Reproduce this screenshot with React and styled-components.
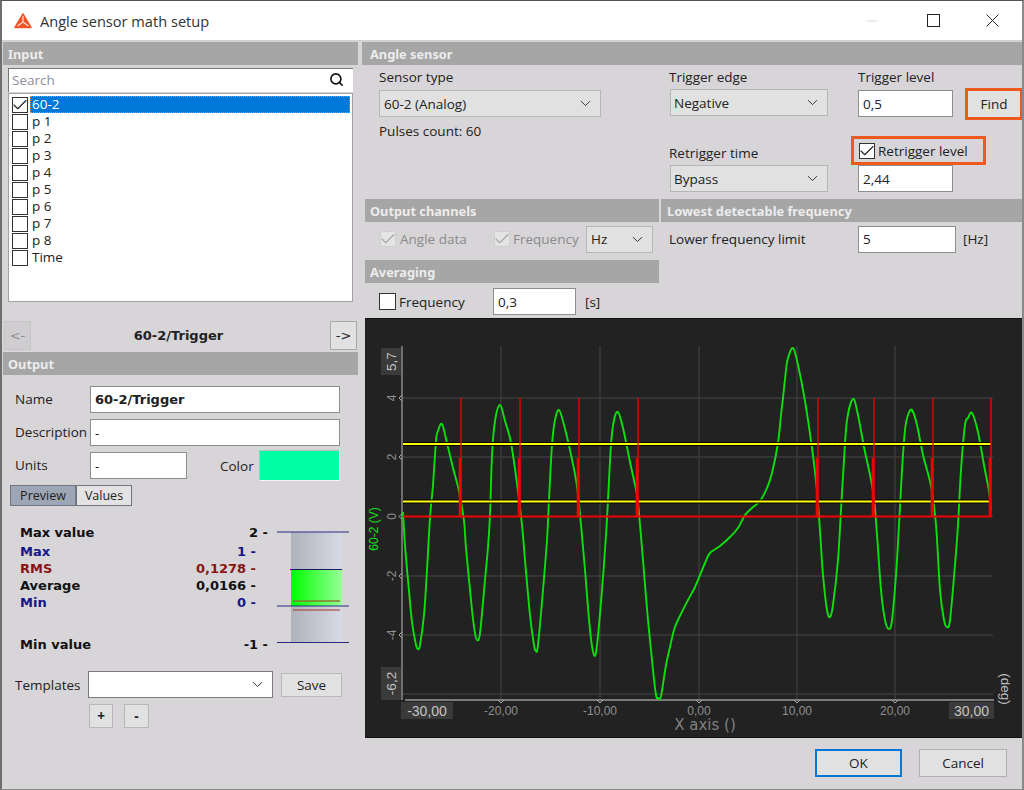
import React from 'react';
import styled, { createGlobalStyle } from 'styled-components';
import { Search, ChevronDown, Minus, X, Check } from 'lucide-react';

const GlobalStyle = createGlobalStyle`
  html, body {
    margin: 0;
    padding: 0;
    background: #d7d5d8;
  }
  * {
    box-sizing: border-box;
  }
`;

// Window frame
const Window = styled.div`
  width: 1024px;
  height: 790px;
  display: flex;
  flex-direction: column;
  background: #d7d5d8;
  border-top: 1px solid #555;
  border-left: 2px solid #6e6e6e;
  border-right: 2px solid #8a8a8a;
  border-bottom: 1px solid #8a8a8a;
  font-family: "Open Sans", "Liberation Sans", sans-serif;
  font-size: 13.5px;
  color: #222;
  overflow: hidden;
`;

const TitleBar = styled.div`
  height: 40px;
  flex: none;
  display: flex;
  align-items: center;
  background: #fff;
  border-bottom: 1px solid #d0d0d0;
  padding-left: 12px;
`;

const TitleText = styled.span`
  margin-left: 8px;
  font-size: 14.6px;
  color: #333;
  flex: 1;
`;

const WindowButton = styled.div`
  width: 60px;
  height: 40px;
  display: flex;
  align-items: center;
  justify-content: center;
  color: ${(p) => (p.$muted ? '#c4c4c4' : '#222')};
`;

const MaximizeGlyph = styled.span`
  width: 13px;
  height: 13px;
  margin-left: 2px;
  border: 1.4px solid #222;
`;

const Body = styled.div`
  flex: 1;
  min-height: 0;
  display: grid;
  grid-template-columns: 356px 1fr;
  gap: 4px;
  padding-top: 1px;
`;

const SectionHeader = styled.div`
  height: 23px;
  display: flex;
  align-items: center;
  padding-left: ${(p) => p.$pad || 5}px;
  background: #a6a6a6;
  color: #ececec;
  font-family: "Noto Sans", sans-serif;
  font-weight: 700;
  font-size: 12.8px;
`;

// Left column
const LeftColumn = styled.div`
  display: flex;
  flex-direction: column;
  padding-left: 1px;
`;

const SearchBox = styled.div`
  height: 24px;
  margin: 3px 5px 1px 5px;
  display: flex;
  align-items: center;
  justify-content: space-between;
  padding: 0 9px 2px 3px;
  background: #fff;
  border-top: 1px solid #777;
  border-left: 1px solid #777;
  color: #8d8d9a;
`;

const ChannelList = styled.div`
  height: 209px;
  margin: 0 5px;
  padding: 2px 2px 2px 3px;
  background: #fff;
  border: 1px solid #a2a2a2;
`;

const ChannelRow = styled.div`
  height: 17px;
  display: flex;
  align-items: center;
  gap: 2px;
`;

const Box = styled.span`
  width: ${(p) => p.$size || 16}px;
  height: ${(p) => p.$size || 16}px;
  flex: none;
  display: inline-flex;
  align-items: center;
  justify-content: center;
  background: ${(p) => (p.$disabled ? '#e4e4e4' : '#fff')};
  border: 1px solid ${(p) => (p.$disabled ? '#cfcfcf' : '#333')};
  color: ${(p) => (p.$disabled ? '#a8a8a8' : '#222')};

  svg {
    flex: none;
  }
`;

const ChannelName = styled.span`
  flex: ${(p) => (p.$selected ? 1 : 'none')};
  height: 17px;
  line-height: 16px;
  padding-left: 2px;
  font-size: 13.5px;
  color: ${(p) => (p.$selected ? '#fff' : '#222')};
  background: ${(p) => (p.$selected ? '#0078d7' : 'transparent')};
  outline: ${(p) => (p.$selected ? '1px dotted #f08a3c' : 'none')};
  outline-offset: -1px;
`;

const NavRow = styled.div`
  height: 30px;
  margin: 18px 1px 2px 1px;
  display: flex;
  align-items: center;
  justify-content: space-between;
`;

const NavButton = styled.div`
  width: 27px;
  height: 29px;
  display: flex;
  align-items: center;
  justify-content: center;
  font-family: "DejaVu Sans", sans-serif;
  font-size: 13px;
  color: ${(p) => (p.$disabled ? '#8e8e8e' : '#222')};
  background: ${(p) => (p.$disabled ? '#cfcdd0' : '#e1e1e1')};
  border: 1px solid ${(p) => (p.$disabled ? '#c4c4c4' : '#a8a8a8')};
`;

const NavTitle = styled.span`
  font-family: "DejaVu Sans", sans-serif;
  font-weight: 700;
  font-size: 13px;
  margin-right: 4px;
`;

const OutputForm = styled.div`
  padding: 11px 0 0 12px;
  display: flex;
  flex-direction: column;
  gap: 6px;
`;

const FormRow = styled.div`
  display: flex;
  align-items: center;
  height: 27px;
`;

const FormLabel = styled.span`
  width: 75px;
  flex: none;
  margin-top: -2px;
`;

const TextField = styled.div`
  width: ${(p) => p.$width}px;
  height: 27px;
  flex: none;
  display: flex;
  align-items: center;
  padding-left: 4px;
  background: #fff;
  border: 1px solid #8e8e8e;
  font-weight: ${(p) => (p.$bold ? 700 : 400)};
  font-family: ${(p) => (p.$bold ? '"DejaVu Sans", sans-serif' : 'inherit')};
  font-size: ${(p) => (p.$bold ? '13px' : 'inherit')};
`;

const ColorLabel = styled.span`
  margin-left: 33px;
  width: 39px;
`;

const ColorSwatch = styled.div`
  width: 81px;
  height: 31px;
  background: #00ffa5;
  border: 1px solid #f4f4f4;
  border-top-color: #bdbdbd;
  border-left-color: #bdbdbd;
`;

const Tabs = styled.div`
  display: flex;
  margin: 6px 0 0 7px;
`;

const Tab = styled.div`
  height: 21px;
  width: ${(p) => p.$width}px;
  display: flex;
  align-items: center;
  justify-content: center;
  font-size: 12.5px;
  background: ${(p) => (p.$active ? '#9ca6b5' : '#e3e3e3')};
  border: 1px solid #6f7680;
`;

const StatsArea = styled.div`
  height: 134px;
  margin-top: 25px;
  display: flex;
`;

const StatRows = styled.div`
  width: 273px;
  flex: none;
  position: relative;
  font-family: "DejaVu Sans", sans-serif;
  font-weight: 700;
  font-size: 13px;
`;

const StatRow = styled.div`
  position: absolute;
  top: ${(p) => p.$y}px;
  left: 17px;
  right: ${(p) => (p.$limit ? 8 : 20)}px;
  display: flex;
  justify-content: space-between;
  line-height: 18px;
  color: ${(p) => p.$color || '#111'};
`;

const Gauge = styled.svg`
  display: block;
`;

const TemplateRow = styled.div`
  margin: 6px 0 0 12px;
  height: 27px;
  display: flex;
  align-items: center;
  gap: 8px;
`;

const TemplateLabel = styled.span`
  width: 65px;
  flex: none;
`;

const SmallButtons = styled.div`
  margin: 6px 0 0 86px;
  display: flex;
  gap: 11px;
`;

const Button = styled.div`
  width: ${(p) => p.$width}px;
  height: ${(p) => p.$height || 24}px;
  flex: none;
  display: flex;
  align-items: center;
  justify-content: center;
  background: #e1e1e1;
  border: 1px solid #b8b8b8;
  font-weight: ${(p) => (p.$bold ? 700 : 400)};
`;

// Dropdowns
const Select = styled.div`
  width: ${(p) => p.$width}px;
  height: 27px;
  flex: none;
  display: flex;
  align-items: center;
  justify-content: space-between;
  padding: 0 6px 0 4px;
  background: ${(p) => (p.$white ? '#fff' : '#e1e1e1')};
  border: 1px solid ${(p) => (p.$white ? '#7a7a7a' : '#b6b6b6')};
`;

const EdgeSelect = styled(Select)`
  margin-left: 1px;
  padding-left: 3px;
`;

// Right column
const RightColumn = styled.div`
  display: flex;
  flex-direction: column;
  min-width: 0;
`;

const SensorGrid = styled.div`
  height: 134px;
  display: grid;
  grid-template-columns: 290px 189px 1fr;
  padding-left: 17px;
`;

const FieldColumn = styled.div`
  display: flex;
  flex-direction: column;
`;

const FieldLabel = styled.div`
  height: 25px;
  padding-top: 3px;
  line-height: 19px;
`;

const ShortLabel = styled(FieldLabel)`
  height: 24px;
`;

const Spaced = styled.div`
  margin-top: ${(p) => p.$top}px;
`;

const TriggerRow = styled.div`
  height: 27px;
  display: flex;
  align-items: flex-start;
  gap: 12px;
`;

const Highlight = styled.div`
  border: 3px solid #f0591e;
`;

const FindOutline = styled(Highlight)`
  width: 58px;
  height: 32px;
  flex: none;
  margin-top: -2px;
`;

const FindButton = styled.div`
  height: 100%;
  display: flex;
  align-items: center;
  justify-content: center;
  background: #e1e1e1;
`;

const RetriggerOutline = styled(Highlight)`
  width: 135px;
  height: 29px;
  margin: 19px 0 0 -7px;
  padding-left: 5px;
  display: flex;
  align-items: center;
  gap: 3px;
`;

const MiddleGrid = styled.div`
  height: 119px;
  display: grid;
  grid-template-columns: 294px 1fr;
  gap: 2px;
  padding-left: 3px;
`;

const Stack = styled.div`
  display: flex;
  flex-direction: column;
`;

const CheckRow = styled.div`
  height: 38px;
  display: flex;
  align-items: center;
  padding: 0 0 4px 15px;
`;

const CheckLabel = styled.span`
  margin-left: ${(p) => p.$gap || 4}px;
  width: ${(p) => p.$width}px;
  flex: none;
  color: ${(p) => (p.$disabled ? '#8a8a8a' : '#222')};
`;

const AveragingRow = styled.div`
  height: 35px;
  display: flex;
  align-items: center;
  padding: 2px 0 0 14px;
`;

const UnitText = styled.span`
  margin-left: ${(p) => p.$gap}px;
`;

const LimitRow = styled.div`
  height: 38px;
  display: flex;
  align-items: center;
  padding: 0 0 4px 8px;
`;

const LimitLabel = styled.span`
  width: 189px;
  flex: none;
`;

const ChartPanel = styled.div`
  flex: 1;
  margin-left: 3px;
  background: #222;
  border-top: 1px solid #111;
  border-bottom: 1px solid #111;
`;

const ChartSvg = styled.svg`
  display: block;
`;

const Footer = styled.div`
  height: 52px;
  flex: none;
  display: flex;
  justify-content: flex-end;
  align-items: flex-start;
  gap: 17px;
  padding: 12px 15px 0 0;
`;

const DialogButton = styled.div`
  width: ${(p) => p.$width}px;
  height: 28px;
  display: flex;
  align-items: center;
  justify-content: center;
  background: #e1e1e1;
  border: ${(p) => (p.$primary ? '2px solid #0078d7' : '1px solid #b0b0b0')};
`;

const channels = ['p 1', 'p 2', 'p 3', 'p 4', 'p 5', 'p 6', 'p 7', 'p 8', 'Time'];

const stats = [
  { label: 'Max value', value: '2 -', y: 0, limit: true },
  { label: 'Max', value: '1 -', y: 19, color: '#16168a' },
  { label: 'RMS', value: '0,1278 -', y: 36, color: '#8a1414' },
  { label: 'Average', value: '0,0166 -', y: 53 },
  { label: 'Min', value: '0 -', y: 70, color: '#16168a' },
  { label: 'Min value', value: '-1 -', y: 112, limit: true },
];

// chart drawing is in chart-local coordinates: page x - 365, page y - 319
const OX = 365;
const OY = 319;

const trace = [
  [403, 512], [405, 545], [408, 580], [412, 622], [416, 645], [418, 649], [420, 645], [424, 615], [427, 570],
  [430, 518], [433, 485], [436, 441], [438, 431], [442, 424], [447, 443], [453, 468], [459, 491], [464, 521],
  [466, 548], [472, 610], [475, 633], [477, 640], [480, 633], [485, 580], [488, 547], [490, 515], [492, 455],
  [495, 421], [500, 405], [505, 421], [511, 443], [518, 491], [522, 525], [525, 560], [530, 615], [534, 645],
  [536, 651], [538, 645], [543, 590], [547, 540], [549, 500], [552, 445], [555, 420], [559, 410], [564, 425],
  [570, 450], [577, 486], [581, 525], [585, 570], [590, 630], [594, 655], [597, 645], [602, 590], [606, 535],
  [608, 500], [611, 445], [614, 420], [618, 412], [623, 428], [630, 462], [637, 495], [640, 525], [643, 560],
  [648, 620], [653, 670], [656, 695], [658, 698], [661, 696], [666, 665], [670, 647], [674, 630], [678, 620],
  [688, 600], [695, 587], [705, 563], [710, 553], [720, 546], [730, 537], [738, 528], [745, 515], [752, 508],
  [760, 501], [767, 488], [772, 473], [778, 443], [781, 415], [783, 398], [786, 370], [788, 358], [793, 348],
  [798, 365], [805, 401], [812, 448], [817, 491], [820, 531], [823, 575], [827, 610], [830, 617], [833, 605],
  [838, 560], [841, 510], [844, 460], [847, 420], [853, 399], [858, 415], [864, 447], [873, 491], [877, 535],
  [881, 590], [885, 620], [889, 629], [892, 620], [896, 575], [899, 525], [902, 470], [905, 430], [908, 415],
  [912, 410], [917, 425], [923, 455], [931, 486], [936, 525], [940, 590], [944, 620], [947, 627], [950, 620],
  [955, 565], [958, 525], [961, 470], [965, 425], [968, 418], [972, 413], [978, 432], [984, 465], [989, 491],
  [991, 510],
];

const toPath = (pts) => {
  const p = pts.map(([x, y]) => [x - OX, y - OY]);
  let d = `M${p[0][0]} ${p[0][1]}`;
  for (let i = 0; i < p.length - 1; i++) {
    const a = p[i - 1] || p[i];
    const b = p[i];
    const c = p[i + 1];
    const e = p[i + 2] || c;
    const c1 = [b[0] + (c[0] - a[0]) / 6, b[1] + (c[1] - a[1]) / 6];
    const c2 = [c[0] - (e[0] - b[0]) / 6, c[1] - (e[1] - b[1]) / 6];
    d += `C${c1[0].toFixed(1)} ${c1[1].toFixed(1)} ${c2[0].toFixed(1)} ${c2[1].toFixed(1)} ${c[0]} ${c[1]}`;
  }
  return d;
};

const pulses = [461, 520, 579, 638, 818, 874, 933, 991];
const gridX = [501, 600, 699, 797, 895];
const gridY = [398, 457, 576, 635, 694];
const xTicks = [[501, '-20,00'], [600, '-10,00'], [699, '0,00'], [797, '10,00'], [895, '20,00']];
const yTicks = [[398, '4'], [457, '2'], [516.5, '0'], [576, '-2'], [635, '-4']];

const Chart = () => (
  <ChartSvg width="657" height="418" viewBox="0 0 657 418" fontFamily='"Liberation Sans", sans-serif'>
    {gridX.map((x) => (
      <line key={x} x1={x - OX} x2={x - OX} y1={346 - OY} y2={700 - OY} stroke="#3b3b3b" strokeWidth="1.5" />
    ))}
    {gridY.concat(516.5).map((y) => (
      <line key={y} x1={402 - OX} x2={993 - OX} y1={y - OY} y2={y - OY} stroke="#3b3b3b" strokeWidth="1.5" />
    ))}
    <line x1={402 - OX} x2={402 - OX} y1={346 - OY} y2={700 - OY} stroke="#8a8a8a" strokeWidth="1.5" />
    <line x1={405 - OX} x2={994 - OX} y1={700 - OY} y2={700 - OY} stroke="#9a9a9a" strokeWidth="1.5" />
    {xTicks.map(([x, t]) => (
      <g key={t}>
        <path d={`M${x - OX - 3} ${700 - OY}l3 3l3 -3`} fill="none" stroke="#aaa" />
        <text x={x - OX} y={715 - OY} textAnchor="middle" fontSize="12" fill="#8f8f8f">{t}</text>
      </g>
    ))}
    {yTicks.map(([y, t]) => (
      <g key={t}>
        <path d={`M${402 - OX} ${y - OY - 3}l-3 3l3 3`} fill="none" stroke="#aaa" />
        <text transform={`translate(${396 - OX} ${y - OY}) rotate(-90)`} textAnchor="middle" fontSize="12" fill="#8f8f8f">{t}</text>
      </g>
    ))}

    <rect x={381 - OX} y={348 - OY} width="20" height="27" fill="#3a3a3a" />
    <text transform={`translate(${396 - OX} ${361.5 - OY}) rotate(-90)`} textAnchor="middle" fontSize="13.5" fill="#c4c4c4">5,7</text>
    <rect x={381 - OX} y={667 - OY} width="20" height="33" fill="#3a3a3a" />
    <text transform={`translate(${396 - OX} ${683.5 - OY}) rotate(-90)`} textAnchor="middle" fontSize="13.5" fill="#c4c4c4">-6,2</text>
    <rect x={401 - OX} y={702 - OY} width="52" height="17" fill="#3a3a3a" />
    <text x={427 - OX} y={715.5 - OY} textAnchor="middle" fontSize="14" fill="#c4c4c4">-30,00</text>
    <rect x={949 - OX} y={702 - OY} width="45" height="17" fill="#3a3a3a" />
    <text x={971.5 - OX} y={715.5 - OY} textAnchor="middle" fontSize="14" fill="#c4c4c4">30,00</text>

    <text transform={`translate(${378 - OX} ${529 - OY}) rotate(-90)`} textAnchor="middle" fontSize="12" fill="#18e018">60-2 (V)</text>
    <text x={705 - OX} y={730 - OY} textAnchor="middle" fontSize="15" fontFamily='"DejaVu Sans", sans-serif' fill="#808080">X axis ()</text>
    <text transform={`translate(${1001 - OX} ${689 - OY}) rotate(90)`} textAnchor="middle" fontSize="13.5" fill="#c0c0c0">(deg)</text>

    <path d={toPath(trace)} fill="none" stroke="#0ce00c" strokeWidth="1.9" />

    {[444, 501.5].map((y) => (
      <g key={y}>
        <line x1={403 - OX} x2={991 - OX} y1={y - OY} y2={y - OY} stroke="#000" strokeWidth="4" />
        <line x1={403 - OX} x2={991 - OX} y1={y - OY} y2={y - OY} stroke="#ffff10" strokeWidth="2" />
      </g>
    ))}

    <path d={`M${403 - OX} ${516.5 - OY}H${991 - OX}`} stroke="#f00000" strokeWidth="2" fill="none" />
    {pulses.map((x) => (
      <g key={x}>
        <line x1={x - OX} x2={x - OX} y1={398 - OY} y2={517 - OY} stroke="#f00000" strokeWidth="1.4" />
        <line x1={x - 1 - OX} x2={x - 1 - OX} y1={458 - OY} y2={517 - OY} stroke="#f00000" strokeWidth="2.6" />
      </g>
    ))}
  </ChartSvg>
);

const GaugeDrawing = () => (
  <Gauge width="75" height="114" viewBox="0 0 75 114">
    <defs>
      <linearGradient id="gaugeBack" x1="0" x2="1" y1="0" y2="0">
        <stop offset="0" stopColor="#aeb2ba" />
        <stop offset="1" stopColor="#d7dae4" />
      </linearGradient>
      <linearGradient id="gaugeFill" x1="0" x2="1" y1="0" y2="0">
        <stop offset="0" stopColor="#00ff00" />
        <stop offset="1" stopColor="#98ff98" />
      </linearGradient>
    </defs>
    <rect x="15" y="1" width="51" height="111" fill="url(#gaugeBack)" />
    <rect x="15" y="38" width="51" height="37" fill="url(#gaugeFill)" />
    <line x1="1" x2="73" y1="1" y2="1" stroke="#2a2a80" />
    <line x1="14" x2="66" y1="38.5" y2="38.5" stroke="#1a1a60" />
    <line x1="17" x2="64" y1="70" y2="70" stroke="#8a7a30" strokeWidth="1.5" />
    <line x1="1" x2="73" y1="75" y2="75" stroke="#2a2a80" />
    <line x1="17" x2="64" y1="79" y2="79" stroke="#a03030" />
    <line x1="1" x2="73" y1="111.5" y2="111.5" stroke="#2a2a80" />
  </Gauge>
);

const Logo = () => (
  <svg width="18" height="16" viewBox="0 0 18 16">
    <path d="M9 1L17 14.5H1Z" fill="#f0552a" stroke="#f0552a" strokeWidth="1.5" strokeLinejoin="round" />
    <path d="M9 9L9 3M9 9L3.5 13M9 9L14.5 13" stroke="#ffd9cc" strokeWidth="1.3" fill="none" />
  </svg>
);

const Arrow = () => <ChevronDown size={17} strokeWidth={1.4} color="#333" />;

const Tick = () => <Check size={18} strokeWidth={1.5} />;

export default function App() {
  return (
    <>
      <GlobalStyle />
      <Window>
        <TitleBar>
          <Logo />
          <TitleText>Angle sensor math setup</TitleText>
          <WindowButton $muted><Minus size={16} strokeWidth={1} /></WindowButton>
          <WindowButton><MaximizeGlyph /></WindowButton>
          <WindowButton><X size={23} strokeWidth={1} /></WindowButton>
        </TitleBar>

        <Body>
          <LeftColumn>
            <SectionHeader>Input</SectionHeader>
            <SearchBox>
              Search
              <Search size={15} strokeWidth={2.6} color="#111" />
            </SearchBox>
            <ChannelList>
              <ChannelRow>
                <Box><Tick /></Box>
                <ChannelName $selected>60-2</ChannelName>
              </ChannelRow>
              {channels.map((name) => (
                <ChannelRow key={name}>
                  <Box />
                  <ChannelName>{name}</ChannelName>
                </ChannelRow>
              ))}
            </ChannelList>

            <NavRow>
              <NavButton $disabled>&lt;-</NavButton>
              <NavTitle>60-2/Trigger</NavTitle>
              <NavButton>-&gt;</NavButton>
            </NavRow>

            <SectionHeader>Output</SectionHeader>
            <OutputForm>
              <FormRow>
                <FormLabel>Name</FormLabel>
                <TextField $width={250} $bold>60-2/Trigger</TextField>
              </FormRow>
              <FormRow>
                <FormLabel>Description</FormLabel>
                <TextField $width={250}>-</TextField>
              </FormRow>
              <FormRow>
                <FormLabel>Units</FormLabel>
                <TextField $width={97}>-</TextField>
                <ColorLabel>Color</ColorLabel>
                <ColorSwatch />
              </FormRow>
            </OutputForm>
            <Tabs>
              <Tab $active $width={66}>Preview</Tab>
              <Tab $width={56}>Values</Tab>
            </Tabs>
            <StatsArea>
              <StatRows>
                {stats.map((s) => (
                  <StatRow key={s.label} $y={s.y - 7} $color={s.color} $limit={s.limit}>
                    <span>{s.label}</span>
                    <span>{s.value}</span>
                  </StatRow>
                ))}
              </StatRows>
              <GaugeDrawing />
            </StatsArea>
            <TemplateRow>
              <TemplateLabel>Templates</TemplateLabel>
              <Select $width={185} $white><span /><Arrow /></Select>
              <Button $width={61}>Save</Button>
            </TemplateRow>
            <SmallButtons>
              <Button $width={24} $bold>+</Button>
              <Button $width={25} $bold>-</Button>
            </SmallButtons>
          </LeftColumn>

          <RightColumn>
            <SectionHeader $pad={8}>Angle sensor</SectionHeader>
            <SensorGrid>
              <FieldColumn>
                <FieldLabel>Sensor type</FieldLabel>
                <Select $width={222}>60-2 (Analog)<Arrow /></Select>
                <Spaced $top={5}>Pulses count: 60</Spaced>
              </FieldColumn>
              <FieldColumn>
                <ShortLabel>Trigger edge</ShortLabel>
                <EdgeSelect $width={158}>Negative<Arrow /></EdgeSelect>
                <Spaced $top={25}><ShortLabel>Retrigger time</ShortLabel></Spaced>
                <EdgeSelect $width={158}>Bypass<Arrow /></EdgeSelect>
              </FieldColumn>
              <FieldColumn>
                <FieldLabel>Trigger level</FieldLabel>
                <TriggerRow>
                  <TextField $width={95}>0,5</TextField>
                  <FindOutline><FindButton>Find</FindButton></FindOutline>
                </TriggerRow>
                <RetriggerOutline>
                  <Box><Tick /></Box>
                  Retrigger level
                </RetriggerOutline>
                <TextField $width={95}>2,44</TextField>
              </FieldColumn>
            </SensorGrid>

            <MiddleGrid>
              <Stack>
                <SectionHeader>Output channels</SectionHeader>
                <CheckRow>
                  <Box $disabled><Tick /></Box>
                  <CheckLabel $disabled $width={94}>Angle data</CheckLabel>
                  <Box $disabled><Tick /></Box>
                  <CheckLabel $disabled $width={73} $gap={3}>Frequency</CheckLabel>
                  <Select $width={67}>Hz<Arrow /></Select>
                </CheckRow>
                <SectionHeader>Averaging</SectionHeader>
                <AveragingRow>
                  <Box $size={17} />
                  <CheckLabel $width={94} $gap={3}>Frequency</CheckLabel>
                  <TextField $width={83}>0,3</TextField>
                  <UnitText $gap={9}>[s]</UnitText>
                </AveragingRow>
              </Stack>
              <Stack>
                <SectionHeader $pad={6}>Lowest detectable frequency</SectionHeader>
                <LimitRow>
                  <LimitLabel>Lower frequency limit</LimitLabel>
                  <TextField $width={98}>5</TextField>
                  <UnitText $gap={7}>[Hz]</UnitText>
                </LimitRow>
              </Stack>
            </MiddleGrid>

            <ChartPanel>
              <Chart />
            </ChartPanel>
          </RightColumn>
        </Body>

        <Footer>
          <DialogButton $primary $width={87}>OK</DialogButton>
          <DialogButton $width={88}>Cancel</DialogButton>
        </Footer>
      </Window>
    </>
  );
}
